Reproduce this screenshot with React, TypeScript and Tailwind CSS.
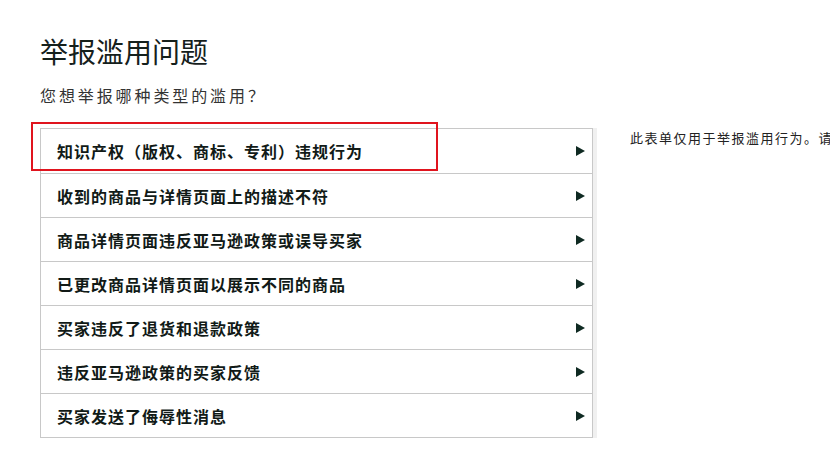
const items = [
  "知识产权（版权、商标、专利）违规行为",
  "收到的商品与详情页面上的描述不符",
  "商品详情页面违反亚马逊政策或误导买家",
  "已更改商品详情页面以展示不同的商品",
  "买家违反了退货和退款政策",
  "违反亚马逊政策的买家反馈",
  "买家发送了侮辱性消息",
];

const font = { fontFamily: '"Noto Sans CJK SC", "Noto Sans", sans-serif' };

export default function App() {
  return (
    <div className="w-[830px] h-[449px] bg-white overflow-hidden relative" style={font}>
      <div className="pl-[40px] pt-[32px]">
        <h1 className="text-[28px] leading-[38px] text-[#15201c] font-normal">举报滥用问题</h1>
        <p className="mt-[15px] text-[16px] leading-[20px] text-[#333] tracking-[2.9px]">您想举报哪种类型的滥用？</p>
        <div className="mt-[23px] flex items-start gap-[37px]">
          <div className="w-[553px] border border-[#c8c8c8] shadow-[4px_0_0_0_#f0f0f0] shrink-0">
            {items.map((t, i) => (
              <div
                key={t}
                className={`h-[44px] flex items-center justify-between pl-[16px] pr-[7px] ${i > 0 ? "border-t border-[#c8c8c8]" : ""}`}
              >
                <span className="text-[16px] font-bold text-[#111a17] tracking-[1px]">{t}</span>
                <span className="w-0 h-0 border-y-[5px] border-y-transparent border-l-[9px] border-l-[#0f2a22]" />
              </div>
            ))}
          </div>
          <p className="pt-[1px] text-[13px] leading-[18px] text-[#222] tracking-[1.5px] whitespace-nowrap">
            此表单仅用于举报滥用行为。请
          </p>
        </div>
      </div>
      <div className="absolute left-[31px] top-[122px] w-[407px] h-[49px] border-[2px] border-[#e0141e]" />
    </div>
  );
}
